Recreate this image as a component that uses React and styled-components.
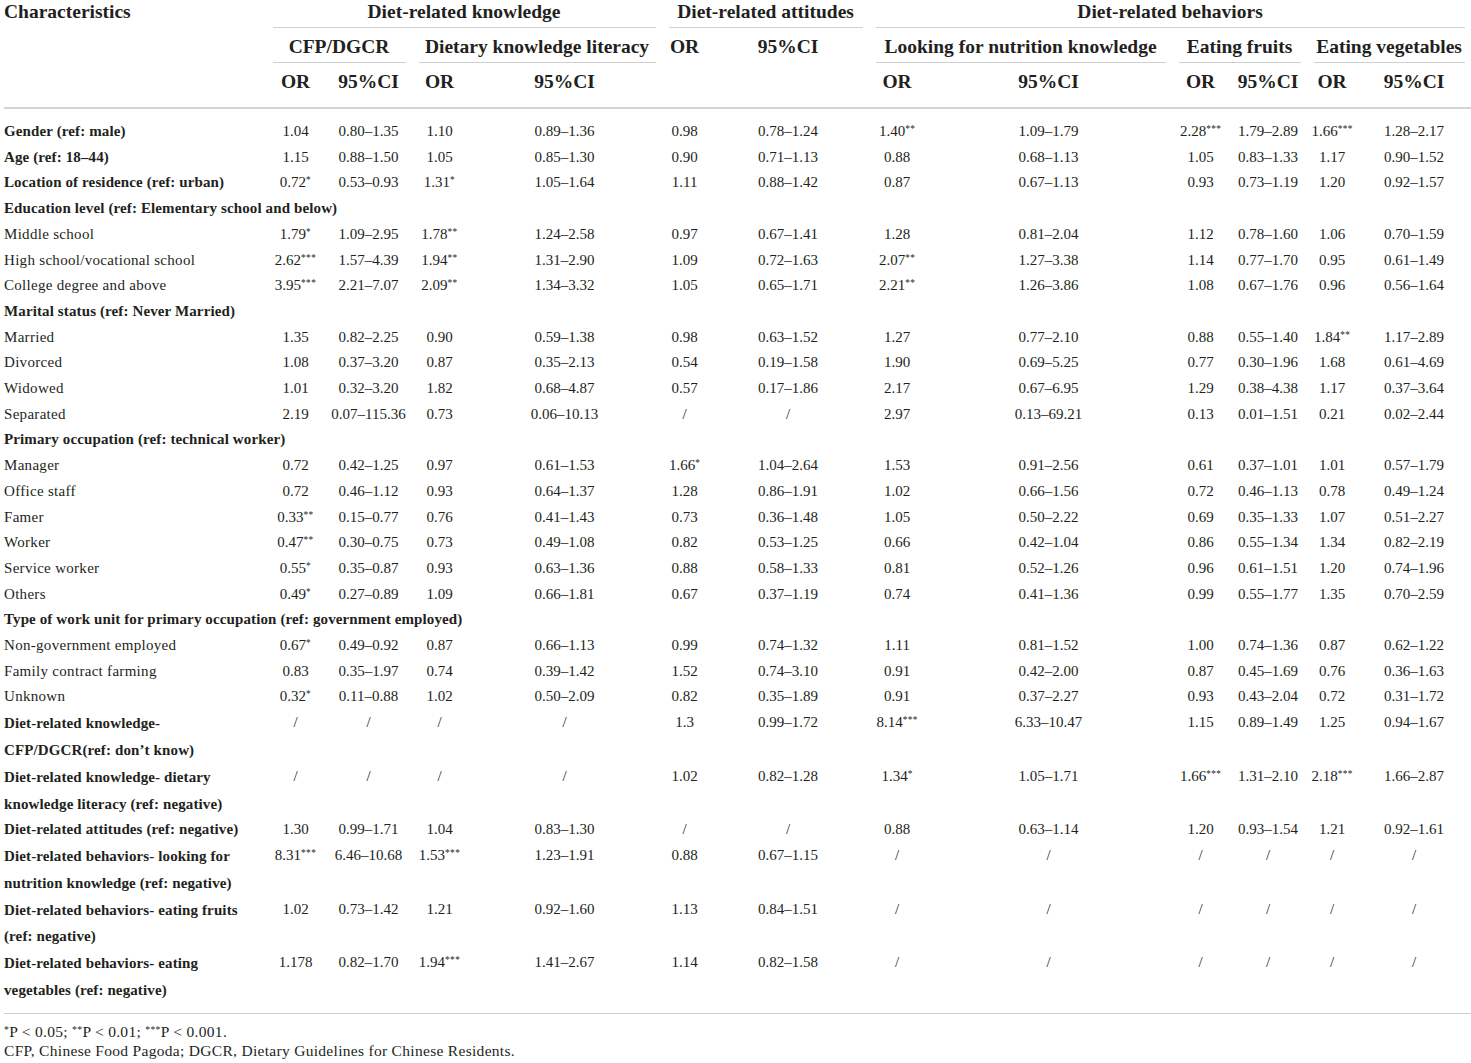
import React from "react";
import styled, { createGlobalStyle } from "styled-components";

const GlobalStyle = createGlobalStyle`
  html, body { margin: 0; padding: 0; background: #ffffff; }
  body {
    font-family: "Liberation Serif", "Times New Roman", "DejaVu Serif", serif;
    color: #231f20;
  }
`;

const COLS = [262, 59, 87, 55, 195, 45, 162, 56, 247, 57, 78, 50, 114];

const Page = styled.div`
  width: 1467px;
  padding-left: 4px;
`;

const Table = styled.table`
  width: 1467px;
  table-layout: fixed;
  border-collapse: collapse;
  border-bottom: 1px solid #cfcfcf;
`;

const Col = styled.col`
  width: ${(p) => p.$w}px;
`;

const Head = styled.thead`
  border-bottom: 2px solid #d4d4d4;
`;

const HeadCell = styled.th`
  padding: 0 0 ${(p) => p.$pb || 0}px 0;
  font-size: 19.5px;
  font-weight: bold;
  text-align: ${(p) => p.$align || "center"};
  vertical-align: top;
  white-space: nowrap;
`;

const HeadText = styled.span`
  display: block;
  line-height: 24px;
  margin: 0 ${(p) => (p.$line ? 6.5 : 0)}px ${(p) => (p.$line ? 7 : 0)}px;
  padding-bottom: ${(p) => (p.$line ? 3 : 0)}px;
  border-bottom: ${(p) => (p.$line ? "1px solid #cfcfcf" : "none")};
`;

const Body = styled.tbody`
  & > tr:first-child > td { padding-top: 10px; }
  & > tr:last-child > td { padding-bottom: 9px; }
`;

const Cell = styled.td`
  padding: 0;
  font-size: 15px;
  line-height: 25.7px;
  text-align: center;
  vertical-align: top;
  white-space: nowrap;
`;

const Label = styled.td`
  padding: 0;
  font-size: 15px;
  line-height: ${(p) => (p.$two ? 26.8 : 25.7)}px;
  font-weight: ${(p) => (p.$bold ? "bold" : "normal")};
  letter-spacing: ${(p) => (p.$bold ? 0.12 : 0.3)}px;
  text-align: left;
  vertical-align: top;
  white-space: nowrap;
`;

const Star = styled.sup`
  font-size: 0.62em;
  line-height: 0;
  vertical-align: 0.42em;
  letter-spacing: 0.04em;
`;

const Notes = styled.div`
  padding-top: 8px;
  font-size: 15.5px;
  letter-spacing: 0.3px;
  line-height: 19px;
`;

const Note = styled.p`
  margin: 0;
`;

const Value = ({ v }) => {
  const m = v.match(/^([^*]*)(\**)$/);
  return (
    <>
      {m[1]}
      {m[2] && <Star>{m[2]}</Star>}
    </>
  );
};

const S = "/";
const rows = [
  { label: "Gender (ref: male)", bold: true, v: ["1.04", "0.80–1.35", "1.10", "0.89–1.36", "0.98", "0.78–1.24", "1.40**", "1.09–1.79", "2.28***", "1.79–2.89", "1.66***", "1.28–2.17"] },
  { label: "Age (ref: 18–44)", bold: true, v: ["1.15", "0.88–1.50", "1.05", "0.85–1.30", "0.90", "0.71–1.13", "0.88", "0.68–1.13", "1.05", "0.83–1.33", "1.17", "0.90–1.52"] },
  { label: "Location of residence (ref: urban)", bold: true, v: ["0.72*", "0.53–0.93", "1.31*", "1.05–1.64", "1.11", "0.88–1.42", "0.87", "0.67–1.13", "0.93", "0.73–1.19", "1.20", "0.92–1.57"] },
  { section: "Education level (ref: Elementary school and below)" },
  { label: "Middle school", v: ["1.79*", "1.09–2.95", "1.78**", "1.24–2.58", "0.97", "0.67–1.41", "1.28", "0.81–2.04", "1.12", "0.78–1.60", "1.06", "0.70–1.59"] },
  { label: "High school/vocational school", v: ["2.62***", "1.57–4.39", "1.94**", "1.31–2.90", "1.09", "0.72–1.63", "2.07**", "1.27–3.38", "1.14", "0.77–1.70", "0.95", "0.61–1.49"] },
  { label: "College degree and above", v: ["3.95***", "2.21–7.07", "2.09**", "1.34–3.32", "1.05", "0.65–1.71", "2.21**", "1.26–3.86", "1.08", "0.67–1.76", "0.96", "0.56–1.64"] },
  { section: "Marital status (ref: Never Married)" },
  { label: "Married", v: ["1.35", "0.82–2.25", "0.90", "0.59–1.38", "0.98", "0.63–1.52", "1.27", "0.77–2.10", "0.88", "0.55–1.40", "1.84**", "1.17–2.89"] },
  { label: "Divorced", v: ["1.08", "0.37–3.20", "0.87", "0.35–2.13", "0.54", "0.19–1.58", "1.90", "0.69–5.25", "0.77", "0.30–1.96", "1.68", "0.61–4.69"] },
  { label: "Widowed", v: ["1.01", "0.32–3.20", "1.82", "0.68–4.87", "0.57", "0.17–1.86", "2.17", "0.67–6.95", "1.29", "0.38–4.38", "1.17", "0.37–3.64"] },
  { label: "Separated", v: ["2.19", "0.07–115.36", "0.73", "0.06–10.13", S, S, "2.97", "0.13–69.21", "0.13", "0.01–1.51", "0.21", "0.02–2.44"] },
  { section: "Primary occupation (ref: technical worker)" },
  { label: "Manager", v: ["0.72", "0.42–1.25", "0.97", "0.61–1.53", "1.66*", "1.04–2.64", "1.53", "0.91–2.56", "0.61", "0.37–1.01", "1.01", "0.57–1.79"] },
  { label: "Office staff", v: ["0.72", "0.46–1.12", "0.93", "0.64–1.37", "1.28", "0.86–1.91", "1.02", "0.66–1.56", "0.72", "0.46–1.13", "0.78", "0.49–1.24"] },
  { label: "Famer", v: ["0.33**", "0.15–0.77", "0.76", "0.41–1.43", "0.73", "0.36–1.48", "1.05", "0.50–2.22", "0.69", "0.35–1.33", "1.07", "0.51–2.27"] },
  { label: "Worker", v: ["0.47**", "0.30–0.75", "0.73", "0.49–1.08", "0.82", "0.53–1.25", "0.66", "0.42–1.04", "0.86", "0.55–1.34", "1.34", "0.82–2.19"] },
  { label: "Service worker", v: ["0.55*", "0.35–0.87", "0.93", "0.63–1.36", "0.88", "0.58–1.33", "0.81", "0.52–1.26", "0.96", "0.61–1.51", "1.20", "0.74–1.96"] },
  { label: "Others", v: ["0.49*", "0.27–0.89", "1.09", "0.66–1.81", "0.67", "0.37–1.19", "0.74", "0.41–1.36", "0.99", "0.55–1.77", "1.35", "0.70–2.59"] },
  { section: "Type of work unit for primary occupation (ref: government employed)" },
  { label: "Non-government employed", v: ["0.67*", "0.49–0.92", "0.87", "0.66–1.13", "0.99", "0.74–1.32", "1.11", "0.81–1.52", "1.00", "0.74–1.36", "0.87", "0.62–1.22"] },
  { label: "Family contract farming", v: ["0.83", "0.35–1.97", "0.74", "0.39–1.42", "1.52", "0.74–3.10", "0.91", "0.42–2.00", "0.87", "0.45–1.69", "0.76", "0.36–1.63"] },
  { label: "Unknown", v: ["0.32*", "0.11–0.88", "1.02", "0.50–2.09", "0.82", "0.35–1.89", "0.91", "0.37–2.27", "0.93", "0.43–2.04", "0.72", "0.31–1.72"] },
  { label: ["Diet-related knowledge-", "CFP/DGCR(ref: don’t know)"], bold: true, v: [S, S, S, S, "1.3", "0.99–1.72", "8.14***", "6.33–10.47", "1.15", "0.89–1.49", "1.25", "0.94–1.67"] },
  { label: ["Diet-related knowledge- dietary", "knowledge literacy (ref: negative)"], bold: true, v: [S, S, S, S, "1.02", "0.82–1.28", "1.34*", "1.05–1.71", "1.66***", "1.31–2.10", "2.18***", "1.66–2.87"] },
  { label: "Diet-related attitudes (ref: negative)", bold: true, v: ["1.30", "0.99–1.71", "1.04", "0.83–1.30", S, S, "0.88", "0.63–1.14", "1.20", "0.93–1.54", "1.21", "0.92–1.61"] },
  { label: ["Diet-related behaviors- looking for", "nutrition knowledge (ref: negative)"], bold: true, v: ["8.31***", "6.46–10.68", "1.53***", "1.23–1.91", "0.88", "0.67–1.15", S, S, S, S, S, S] },
  { label: ["Diet-related behaviors- eating fruits", "(ref: negative)"], bold: true, v: ["1.02", "0.73–1.42", "1.21", "0.92–1.60", "1.13", "0.84–1.51", S, S, S, S, S, S] },
  { label: ["Diet-related behaviors- eating", "vegetables (ref: negative)"], bold: true, v: ["1.178", "0.82–1.70", "1.94***", "1.41–2.67", "1.14", "0.82–1.58", S, S, S, S, S, S] },
];

const RowLabel = ({ row }) => {
  const two = Array.isArray(row.label);
  return (
    <Label $bold={row.bold} $two={two}>
      {two ? (
        <>
          {row.label[0]}
          <br />
          {row.label[1]}
        </>
      ) : (
        row.label
      )}
    </Label>
  );
};

export default function App() {
  return (
    <Page>
      <GlobalStyle />
      <Table>
        <colgroup>
          {COLS.map((w, i) => (
            <Col key={i} $w={w} />
          ))}
        </colgroup>
        <Head>
          <tr>
            <HeadCell rowSpan={3} $align="left">
              <HeadText>Characteristics</HeadText>
            </HeadCell>
            <HeadCell colSpan={4}>
              <HeadText $line>Diet-related knowledge</HeadText>
            </HeadCell>
            <HeadCell colSpan={2}>
              <HeadText $line>Diet-related attitudes</HeadText>
            </HeadCell>
            <HeadCell colSpan={6}>
              <HeadText $line>Diet-related behaviors</HeadText>
            </HeadCell>
          </tr>
          <tr>
            <HeadCell colSpan={2}>
              <HeadText $line>CFP/DGCR</HeadText>
            </HeadCell>
            <HeadCell colSpan={2}>
              <HeadText $line>Dietary knowledge literacy</HeadText>
            </HeadCell>
            <HeadCell rowSpan={2}>
              <HeadText>OR</HeadText>
            </HeadCell>
            <HeadCell rowSpan={2}>
              <HeadText>95%CI</HeadText>
            </HeadCell>
            <HeadCell colSpan={2}>
              <HeadText $line>Looking for nutrition knowledge</HeadText>
            </HeadCell>
            <HeadCell colSpan={2}>
              <HeadText $line>Eating fruits</HeadText>
            </HeadCell>
            <HeadCell colSpan={2}>
              <HeadText $line>Eating vegetables</HeadText>
            </HeadCell>
          </tr>
          <tr>
            {["OR", "95%CI", "OR", "95%CI", "OR", "95%CI", "OR", "95%CI", "OR", "95%CI"].map((t, i) => (
              <HeadCell key={i} $pb={13}>
                <HeadText>{t}</HeadText>
              </HeadCell>
            ))}
          </tr>
        </Head>
        <Body>
          {rows.map((row, i) =>
            row.section ? (
              <tr key={i}>
                <Label colSpan={13} $bold>
                  {row.section}
                </Label>
              </tr>
            ) : (
              <tr key={i}>
                <RowLabel row={row} />
                {row.v.map((v, j) => (
                  <Cell key={j}>
                    <Value v={v} />
                  </Cell>
                ))}
              </tr>
            )
          )}
        </Body>
      </Table>
      <Notes>
        <Note>
          <Star>*</Star>P &lt; 0.05; <Star>**</Star>P &lt; 0.01; <Star>***</Star>P &lt; 0.001.
        </Note>
        <Note>CFP, Chinese Food Pagoda; DGCR, Dietary Guidelines for Chinese Residents.</Note>
      </Notes>
    </Page>
  );
}
